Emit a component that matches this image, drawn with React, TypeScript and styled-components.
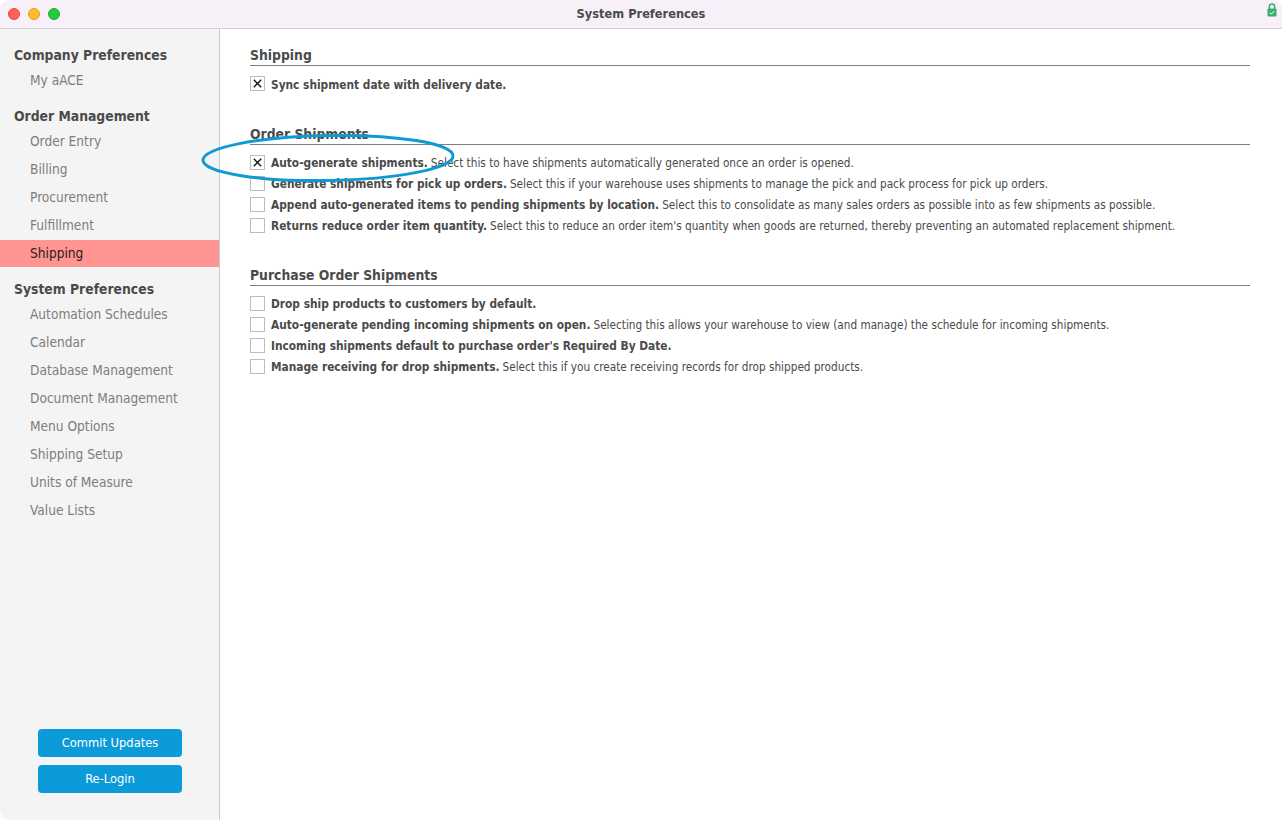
import React from "react";
import styled, { createGlobalStyle } from "styled-components";

const GlobalStyle = createGlobalStyle`
  html, body {
    margin: 0;
    padding: 0;
    height: 100%;
    background: #ffffff;
  }
  #root {
    height: 100%;
  }
  * {
    box-sizing: border-box;
  }
`;

const FONT = `"DejaVu Sans Condensed", "Open Sans", sans-serif`;

const Window = styled.div`
  position: relative;
  width: 1282px;
  height: 820px;
  display: flex;
  flex-direction: column;
  overflow: hidden;
  border-radius: 10px;
  background: #ffffff;
  font-family: ${FONT};
`;

const TitleBar = styled.header`
  position: relative;
  flex: 0 0 29px;
  display: flex;
  align-items: center;
  justify-content: center;
  padding-bottom: 2px;
  background: #f7f0f8;
  border-bottom: 1px solid #d2ced3;
`;

const WindowTitle = styled.div`
  font-size: 12.7px;
  font-weight: 700;
  color: #4a4a4a;
`;

const Lights = styled.div`
  position: absolute;
  left: 8px;
  top: 8px;
  display: flex;
  gap: 8px;
`;

const Light = styled.span<{ $color: string; $edge: string }>`
  width: 12px;
  height: 12px;
  border-radius: 50%;
  background: ${({ $color }) => $color};
  border: 1px solid ${({ $edge }) => $edge};
`;

const LockBadge = styled.svg`
  position: absolute;
  right: 5px;
  top: 3px;
`;

const Body = styled.div`
  flex: 1;
  display: flex;
  min-height: 0;
`;

const Sidebar = styled.aside`
  flex: 0 0 220px;
  display: flex;
  flex-direction: column;
  padding-top: 15px;
  background: #f4f4f4;
  border-right: 1px solid #c9c9c9;
`;

const NavGroup = styled.nav`
  margin-bottom: 11px;
`;

const NavHeading = styled.div`
  height: 22px;
  line-height: 22px;
  padding-left: 14px;
  font-size: 13.8px;
  font-weight: 700;
  color: #4a4a4a;
`;

const NavItem = styled.div<{ $active?: boolean }>`
  height: 28px;
  line-height: 28px;
  padding-left: 30px;
  font-size: 13.6px;
  color: ${({ $active }) => ($active ? "#2c2024" : "#7d7d7d")};
  background: ${({ $active }) => ($active ? "#ff9490" : "transparent")};
  background-clip: content-box;
  ${({ $active }) => $active && "padding-left: 0; text-indent: 30px; padding-top: 1px; line-height: 26px;"}
`;

const SidebarActions = styled.div`
  margin-top: auto;
  padding: 0 37px 27px 38px;
  display: flex;
  flex-direction: column;
  gap: 8px;
`;

const ActionButton = styled.button`
  all: unset;
  height: 28px;
  line-height: 26px;
  text-align: center;
  border-radius: 4px;
  background: #0b9bd8;
  color: #ffffff;
  font-family: ${FONT};
  font-size: 12.8px;
`;

const Content = styled.main`
  flex: 1;
  padding: 15px 32px 0 30px;
`;

const SectionTitle = styled.h2`
  margin: 0 0 7px;
  height: 22px;
  line-height: 22px;
  font-size: 13.8px;
  font-weight: 700;
  color: #4a4a4a;
  border-bottom: 1px solid #7f7f7f;
`;

const Row = styled.div`
  height: 21px;
  display: flex;
  align-items: center;
  gap: 6px;
  font-size: 11.7px;
  color: #4a4a4a;
  white-space: nowrap;
`;

const Box = styled.span`
  flex: 0 0 15px;
  width: 15px;
  height: 15px;
  display: flex;
  align-items: center;
  justify-content: center;
  background: #ffffff;
  border: 1px solid #bdbdbd;
`;

const Label = styled.b`
  font-size: 11.8px;
  font-weight: 700;
`;

const Note = styled.span`
  margin-left: -3px;
`;

const Section = styled.section`
  margin-bottom: 28px;

  &:first-child {
    margin-bottom: 29px;
  }

  &:first-child ${Label} {
    padding-top: 2px;
  }
`;

const Callout = styled.svg`
  position: absolute;
  left: 195px;
  top: 125px;
`;

type Option = { label: string; note?: string; checked?: boolean };

const groups = [
  { title: "Company Preferences", items: ["My aACE"] },
  { title: "Order Management", items: ["Order Entry", "Billing", "Procurement", "Fulfillment", "Shipping"] },
  {
    title: "System Preferences",
    items: [
      "Automation Schedules",
      "Calendar",
      "Database Management",
      "Document Management",
      "Menu Options",
      "Shipping Setup",
      "Units of Measure",
      "Value Lists",
    ],
  },
];

const sections: { title: string; options: Option[] }[] = [
  {
    title: "Shipping",
    options: [{ label: "Sync shipment date with delivery date.", checked: true }],
  },
  {
    title: "Order Shipments",
    options: [
      {
        label: "Auto-generate shipments.",
        note: "Select this to have shipments automatically generated once an order is opened.",
        checked: true,
      },
      {
        label: "Generate shipments for pick up orders.",
        note: "Select this if your warehouse uses shipments to manage the pick and pack process for pick up orders.",
      },
      {
        label: "Append auto-generated items to pending shipments by location.",
        note: "Select this to consolidate as many sales orders as possible into as few shipments as possible.",
      },
      {
        label: "Returns reduce order item quantity.",
        note: "Select this to reduce an order item's quantity when goods are returned, thereby preventing an automated replacement shipment.",
      },
    ],
  },
  {
    title: "Purchase Order Shipments",
    options: [
      { label: "Drop ship products to customers by default." },
      {
        label: "Auto-generate pending incoming shipments on open.",
        note: "Selecting this allows your warehouse to view (and manage) the schedule for incoming shipments.",
      },
      { label: "Incoming shipments default to purchase order's Required By Date." },
      {
        label: "Manage receiving for drop shipments.",
        note: "Select this if you create receiving records for drop shipped products.",
      },
    ],
  },
];

const CheckMark = () => (
  <svg width="9" height="9" viewBox="0 0 9 9">
    <path d="M0.8 0.8 L8.2 8.2 M8.2 0.8 L0.8 8.2" stroke="#111" strokeWidth="1.3" fill="none" />
  </svg>
);

const App = () => {
  return (
    <Window>
      <GlobalStyle />
      <TitleBar>
        <Lights>
          <Light $color="#ff5f57" $edge="#e5483f" />
          <Light $color="#febc2e" $edge="#e09f22" />
          <Light $color="#28c840" $edge="#1fa92f" />
        </Lights>
        <WindowTitle>System Preferences</WindowTitle>
        <LockBadge width="10" height="14" viewBox="0 0 10 14">
          <path d="M2.3 6.5V3.8a2.7 2.7 0 0 1 5.4 0v2.7" fill="none" stroke="#38ad72" strokeWidth="1.5" />
          <rect x="0.5" y="5.5" width="9" height="8" rx="1" fill="#38ad72" />
          <path d="M2.8 9.8l1.4 1.4 3-3" fill="none" stroke="#ffffff" strokeWidth="1" />
        </LockBadge>
      </TitleBar>
      <Body>
        <Sidebar>
          {groups.map((group) => (
            <NavGroup key={group.title}>
              <NavHeading>{group.title}</NavHeading>
              {group.items.map((item) => (
                <NavItem key={item} $active={item === "Shipping"}>
                  {item}
                </NavItem>
              ))}
            </NavGroup>
          ))}
          <SidebarActions>
            <ActionButton>Commit Updates</ActionButton>
            <ActionButton>Re-Login</ActionButton>
          </SidebarActions>
        </Sidebar>
        <Content>
          {sections.map((section) => (
            <Section key={section.title}>
              <SectionTitle>{section.title}</SectionTitle>
              {section.options.map((option) => (
                <Row key={option.label}>
                  <Box>{option.checked && <CheckMark />}</Box>
                  <Label>{option.label}</Label>
                  {option.note && <Note>{option.note}</Note>}
                </Row>
              ))}
            </Section>
          ))}
        </Content>
      </Body>
      <Callout width="270" height="70" viewBox="0 0 270 70">
        <ellipse
          cx="133"
          cy="33"
          rx="125"
          ry="22.5"
          fill="none"
          stroke="#0f9bd2"
          strokeWidth="3"
          transform="rotate(-1 133 33)"
        />
      </Callout>
    </Window>
  );
};

export default App;
